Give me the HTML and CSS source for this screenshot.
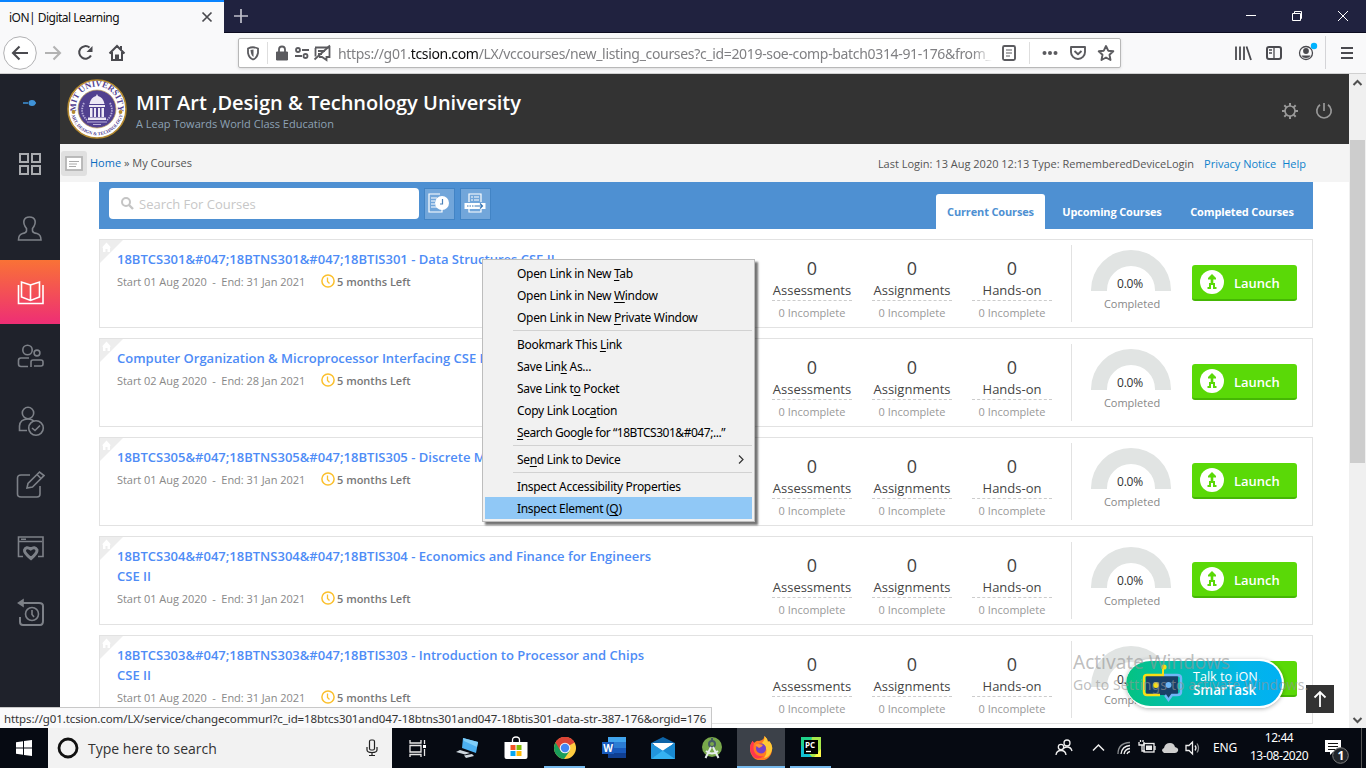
FILE: index.html
```html
<!DOCTYPE html>
<html lang="en">
<head>
<meta charset="utf-8">
<title>iON| Digital Learning</title>
<link rel="stylesheet" href="styles.css">
</head>
<body>
<svg class="defs" width="0" height="0">
  <symbol id="house" viewBox="0 0 24 24"><path d="M0 0H23L0 23Z" fill="#ededed"/><path d="M2 7.500L6.500 2.500L11 7.500H10V12H7.500V9H5.500V12H3V7.500Z" fill="#fff"/></symbol>
  <symbol id="clock" viewBox="0 0 14 14"><circle cx="7" cy="7" r="6.100" fill="none" stroke="#fbc02d" stroke-width="1.500"/><path d="M6.500 3.500V7.500L8.500 9.500" fill="none" stroke="#fbc02d" stroke-width="1.300"/></symbol>
  <symbol id="gauge" viewBox="0 0 80 41"><path d="M0 41V40A40 40 0 0 1 80 40V41H64V40A24 24 0 0 0 16 40V41Z" fill="#e1e4e3"/></symbol>
  <symbol id="launch" viewBox="0 0 24 24"><circle cx="12" cy="12" r="12" fill="#fff"/><path d="M12 4L16 8V9.500H13.300V13H15V17H16.500V19H13V15H11V19H7.500V17H9V13H10.700V9.500H8V8Z" fill="#5ad907"/></symbol>
</svg>

<div class="tabstrip">
  <div class="tab"><span class="tab-title">iON| Digital Learning</span>
    <svg width="12" height="12" viewBox="0 0 12 12"><path d="M1.500 1.500L10.500 10.500M10.500 1.500L1.500 10.500" stroke="#4a4a4f" stroke-width="1.700"/></svg></div>
  <svg class="plus" width="14" height="14"><path d="M7 0V14M0 7H14" stroke="#c0c0cc" stroke-width="1.700"/></svg>
  <div class="winbtns">
    <svg width="46" height="32"><path d="M18 15.500H28" stroke="#fff"/></svg>
    <svg width="46" height="32"><path d="M18.500 13.500H26.500V20.500H18.500ZM20.500 13V11.500H27.500V18.500H27" fill="none" stroke="#fff"/></svg>
    <svg width="46" height="32"><path d="M18 11L28 21M28 11L18 21" stroke="#fff"/></svg>
  </div>
</div>

<div class="toolbar">
  <svg class="nav" width="236" height="40" viewBox="0 0 236 40" fill="none" stroke="#4a4a4f" stroke-width="2">
    <circle cx="20" cy="20" r="16.300" fill="#fff" stroke="#b1b1b3" stroke-width="1"/>
    <path d="M13 20H28M19.500 13.500L13 20L19.500 26.500" stroke-width="2.100"/>
    <path d="M45 20H60M53.500 13.500L60 20L53.500 26.500" stroke="#b3b3b3" stroke-width="2.100"/>
    <path d="M89.500 14.500A6.300 6.300 0 1 0 91 22.500"/><path d="M92.500 13V19H86.500Z" fill="#4a4a4f" stroke="none"/>
    <path d="M109.500 20.500L117 13L124.500 20.500M112 19V27H122V19M116 27V22.500H118V27M121 13V17"/>
  </svg>
  <div class="urlbar">
    <svg width="92" height="28" viewBox="0 0 92 28" fill="none" stroke="#5b5b5f" stroke-width="1.800">
      <path d="M9 9.500Q14 7 19 9.500V14Q18 19 14 20.500Q10 19 9 14Z"/><path d="M14.500 10.500V18Q12 16.500 11.500 11Z" fill="#5b5b5f" stroke="none"/>
      <path d="M28.500 3V25" stroke="#dedede" stroke-width="1"/>
      <path d="M37.500 13H48.500V21H37.500Z" fill="#5b5b5f" stroke="#5b5b5f" stroke-width="1"/><path d="M40 13V10.500A3 3 0 0 1 46 10.500V13"/>
      <circle cx="59" cy="11" r="2"/><circle cx="66.500" cy="17" r="2"/><path d="M63 11H70M56 17H63"/>
      <path d="M76 8.500H90.500V18H87.500V21L83 18H80M76.500 9V17.500M79 12H86M79 15H83" /><path d="M75.500 20.500L91 6.500"/>
    </svg>
    <span class="url">https://g01.<b>tcsion.com</b>/LX/vccourses/new_listing_courses?c_id=2019-soe-comp-batch0314-91-176&amp;from_c</span>
    <svg width="121" height="28" viewBox="0 0 121 28" fill="none" stroke="#5b5b5f" stroke-width="1.900">
      <rect x="4" y="7" width="12" height="14" rx="1.500"/><path d="M7 11H13M7 14H13M7 17H11" stroke-width="1"/>
      <path d="M30.500 3V25" stroke="#dedede" stroke-width="1"/>
      <g fill="#5b5b5f" stroke="none"><circle cx="45.500" cy="14" r="2"/><circle cx="51" cy="14" r="2"/><circle cx="56.500" cy="14" r="2"/></g>
      <path d="M72 8H86V13A7 7 0 0 1 72 13ZM75.500 12L79 15.300L82.500 12" stroke-linejoin="round"/>
      <path d="M107 7L109.200 11.700L114.300 12.300L110.500 15.800L111.500 21L107 18.500L102.500 21L103.500 15.800L99.700 12.300L104.800 11.700Z" stroke-linejoin="round"/>
    </svg>
  </div>
  <svg class="tools" width="135" height="40" viewBox="0 0 135 40" fill="none" stroke="#4a4a4f" stroke-width="2">
    <path d="M5 13.500V27M9 13.500V27M13 13.500V27M15.500 13.500L20 27" stroke-width="1.800"/>
    <rect x="36" y="14" width="14" height="12" rx="2"/><path d="M43 14V26M38 17H41M38 20H41" stroke-width="1.300"/>
    <circle cx="75" cy="20" r="6.500" stroke-width="1.300"/><circle cx="75" cy="18" r="2.900" fill="#4a4a4f" stroke="none"/><path d="M70.500 22.500H79.500Q78.500 25 75 25T70.500 22.500" fill="#4a4a4f" stroke="none"/><circle cx="83" cy="13" r="3.200" fill="#00b3ff" stroke="none"/>
    <path d="M94.500 3V36" stroke="#d4d4d7" stroke-width="1"/>
    <path d="M110 15H122M110 20H122M110 25H122"/>
  </svg>
</div>

<div class="viewport">
  <nav class="side">
    <div class="pin"><svg width="14" height="8"><path d="M0 4H5M11 4H13" stroke="#3f93d8" stroke-width="1.500"/><ellipse cx="9" cy="4" rx="3.500" ry="3" fill="#3f93d8"/></svg></div>
    <a class="item"><svg width="30" height="32" viewBox="0 0 30 32"><path d="M5 6H13V14H5ZM17 6H25V14H17ZM5 18H13V26H5ZM17 18H25V26H17Z" stroke="#a9abaf" stroke-width="2"/></svg></a>
    <a class="item low"><svg width="30" height="32" viewBox="0 0 30 32"><path d="M11.500 15.500Q8 11 9 7.500Q10 4 14.500 4T20 7.500Q21 11 17.500 15.500V18Q18 20 22 20.500Q26 21.500 26 27H3.500Q3.500 21.500 7.500 20.500Q11 20 11.500 18Z"/></svg></a>
    <a class="item active"><svg width="30" height="32" viewBox="0 0 30 32"><path d="M3.500 9V27.500H28V9M15.500 9L6.500 6V21L15.500 24.500L24.500 21V6ZM15.500 9V24.500"/></svg></a>
    <a class="item low"><svg width="30" height="32" viewBox="0 0 30 32"><circle cx="12.500" cy="9" r="4.700"/><circle cx="22" cy="12" r="2.900"/><path d="M14 17H6Q3.500 17 3.500 19.500V23Q3.500 25.500 6 25.500H13M16 26V21Q16 19 18 19H26Q28 19 28 21V23Q28 25 26 25H19"/></svg></a>
    <a class="item low"><svg width="30" height="32" viewBox="0 0 30 32"><circle cx="13" cy="8" r="5.700"/><path d="M12 25.500H4.500V21Q5 14 13 14Q17 14 19 16.500"/><circle cx="21" cy="23" r="7.300"/><path d="M17 23L20 25.500L25 20.500"/></svg></a>
    <a class="item"><svg width="30" height="32" viewBox="0 0 30 32"><path d="M15 7H6Q2.500 7 2.500 10V26Q2.500 29 6 29H22Q25 29 25 26V18M12 20L13 15.500L24.500 4L29 7.500L17.500 19ZM22 6.500L26 10.500"/></svg></a>
    <a class="item"><svg width="30" height="32" viewBox="0 0 30 32"><path d="M8 24.500H3.500V5H28V24.500H23M4 9.500H27M6 7.300H11"/><path d="M16 26.500Q9 21 9.500 18Q11 14 15.700 17Q20 14 22 18Q22.500 21 16 26.500Z" stroke-width="3"/></svg></a>
    <a class="item low"><svg width="30" height="32" viewBox="0 0 30 32"><path d="M7 6H24Q28 6 28 9V24Q28 28 25 28H8Q5 28 5 25V20" stroke-width="2"/><path d="M8 3V9L3.500 6Z" fill="#7d8188"/><circle cx="17" cy="17" r="6.500"/><path d="M17 13V17.500L19 20"/></svg></a>
  </nav>

  <main class="page">
    <header class="head">
      <svg class="crest" width="60" height="60" viewBox="0 0 60 60">
        <defs><path id="arcTop" d="M9.500 33A21 21 0 1 1 50.500 33"/><path id="arcBot" d="M4.500 36A26.200 26.200 0 0 0 55.500 36"/></defs>
        <circle cx="30" cy="30" r="29" fill="#fff" stroke="#b4892f" stroke-width="1.600"/><circle cx="30" cy="30" r="19" fill="#51408f" stroke="#c6a75a" stroke-width=".7"/>
        <text class="seal-top"><textPath href="#arcTop" startOffset="50%">MIT UNIVERSITY</textPath></text>
        <text class="seal-bot"><textPath href="#arcBot" startOffset="50%">ART, DESIGN &amp; TECHNOLOGY</textPath></text>
        <circle cx="6.500" cy="33" r="1.900" fill="#b4892f"/><circle cx="53.500" cy="33" r="1.900" fill="#b4892f"/>
        <path d="M22.500 25Q24 18 29 17L30 15L31 17Q36 18 37.500 25ZM22 26H38V28H22ZM23 29H25.500V38H23ZM27 29H29V38H27ZM31 29H33V38H31ZM34.500 29H37V38H34.500ZM21 38.500H39V41H21Z" fill="#eee9f5"/>
        <path d="M17 24Q12 34 20 41M43 24Q48 34 40 41" fill="none" stroke="#b9afd9" stroke-width="1.800" stroke-dasharray="1.500 1"/><path d="M20 43H40M26 45.500H34" stroke="#b9afd9" stroke-width="1"/>
      </svg>
      <div class="brand"><h1>MIT Art ,Design &amp; Technology University</h1><p>A Leap Towards World Class Education</p></div>
      <svg class="headtools" width="54" height="18" viewBox="0 0 54 18" fill="none" stroke="#999" stroke-width="1.700">
        <circle cx="9" cy="9" r="5"/><path d="M9 1V4M9 14V17M1 9H4M14 9H17M3.300 3.300L5.400 5.400M12.600 12.600L14.700 14.700M3.300 14.700L5.400 12.600M12.600 5.400L14.700 3.300" stroke-width="2"/>
        <path d="M39 2.800A7.200 7.200 0 1 0 47 2.800M43 1V9" />
      </svg>
    </header>
    <div class="crumbs">
      <span class="note"><svg width="18" height="15"><rect x="1" y="1" width="16" height="13" fill="#fff" stroke="#b5b5b5" stroke-width="1.800"/><path d="M4 5.500H14M4 8H12M4 10.500H11" stroke="#aaa"/></svg></span>
      <p class="trail"><a>Home</a> » My Courses</p>
      <p class="login"><span>Last Login: 13 Aug 2020 12:13 Type: RememberedDeviceLogin</span><a>Privacy Notice</a><a>Help</a></p>
    </div>
    <section class="courses">
      <div class="filter">
        <div class="search"><svg width="13" height="13"><circle cx="5" cy="5" r="4" fill="none" stroke="#c4c4c4" stroke-width="2"/><path d="M8 8L12 12" stroke="#c4c4c4" stroke-width="2.400"/></svg><span>Search For Courses</span></div>
        <span class="sqbtn"><svg width="22" height="20" viewBox="0 0 22 20" fill="none" stroke="#fff" stroke-width="1.200"><path d="M12 1H1V19H14V16M3 5H9M3 8H7M3 11H7M3 14H9"/><circle cx="14" cy="10" r="7" fill="#fff" stroke="none"/><path d="M14.500 6V11H12" stroke="#4a80b8"/></svg></span>
        <span class="sqbtn"><svg width="22" height="20" viewBox="0 0 22 20" fill="none" stroke="#fff" stroke-width="1.200"><path d="M5 9V1H17V9M7 4H9M10 4H15M7 7H9M10 7H15M5 16V19H17V16"/><path d="M0.500 10H21.500V16H0.500Z" fill="#fff" stroke="none"/><path d="M3 13H12" stroke="#3977b5" stroke-dasharray="1.500 1"/><path d="M12 13H19M16 10.500L18.500 13L16 15.500" stroke="#3977b5"/></svg></span>
        <div class="tabs"><a class="on">Current Courses</a><a>Upcoming Courses</a><a>Completed Courses</a></div>
      </div>

      <article class="card">
        <svg class="corner"><use href="#house"/></svg>
        <div class="info"><h2>18BTCS301&amp;#047;18BTNS301&amp;#047;18BTIS301 - Data Structures CSE II</h2>
          <p><span class="dates">Start 01 Aug 2020 &nbsp;-&nbsp; End: 31 Jan 2021</span><svg class="clk"><use href="#clock"/></svg><b>5 months Left</b></p></div>
        <dl class="stat"><dt>0</dt><dd>Assessments</dd><dd class="inc">0 Incomplete</dd></dl>
        <dl class="stat"><dt>0</dt><dd>Assignments</dd><dd class="inc">0 Incomplete</dd></dl>
        <dl class="stat"><dt>0</dt><dd>Hands-on</dd><dd class="inc">0 Incomplete</dd></dl>
        <div class="progress"><div class="dial"><svg><use href="#gauge"/></svg><span>0.0%</span></div><em>Completed</em></div>
        <a class="launch"><svg><use href="#launch"/></svg><span>Launch</span></a>
      </article>
      <article class="card">
        <svg class="corner"><use href="#house"/></svg>
        <div class="info"><h2>Computer Organization &amp; Microprocessor Interfacing CSE II</h2>
          <p><span class="dates">Start 02 Aug 2020 &nbsp;-&nbsp; End: 28 Jan 2021</span><svg class="clk"><use href="#clock"/></svg><b>5 months Left</b></p></div>
        <dl class="stat"><dt>0</dt><dd>Assessments</dd><dd class="inc">0 Incomplete</dd></dl>
        <dl class="stat"><dt>0</dt><dd>Assignments</dd><dd class="inc">0 Incomplete</dd></dl>
        <dl class="stat"><dt>0</dt><dd>Hands-on</dd><dd class="inc">0 Incomplete</dd></dl>
        <div class="progress"><div class="dial"><svg><use href="#gauge"/></svg><span>0.0%</span></div><em>Completed</em></div>
        <a class="launch"><svg><use href="#launch"/></svg><span>Launch</span></a>
      </article>
      <article class="card">
        <svg class="corner"><use href="#house"/></svg>
        <div class="info"><h2>18BTCS305&amp;#047;18BTNS305&amp;#047;18BTIS305 - Discrete M</h2>
          <p><span class="dates">Start 01 Aug 2020 &nbsp;-&nbsp; End: 31 Jan 2021</span><svg class="clk"><use href="#clock"/></svg><b>5 months Left</b></p></div>
        <dl class="stat"><dt>0</dt><dd>Assessments</dd><dd class="inc">0 Incomplete</dd></dl>
        <dl class="stat"><dt>0</dt><dd>Assignments</dd><dd class="inc">0 Incomplete</dd></dl>
        <dl class="stat"><dt>0</dt><dd>Hands-on</dd><dd class="inc">0 Incomplete</dd></dl>
        <div class="progress"><div class="dial"><svg><use href="#gauge"/></svg><span>0.0%</span></div><em>Completed</em></div>
        <a class="launch"><svg><use href="#launch"/></svg><span>Launch</span></a>
      </article>
      <article class="card">
        <svg class="corner"><use href="#house"/></svg>
        <div class="info"><h2>18BTCS304&amp;#047;18BTNS304&amp;#047;18BTIS304 - Economics and Finance for Engineers<br>CSE II</h2>
          <p><span class="dates">Start 01 Aug 2020 &nbsp;-&nbsp; End: 31 Jan 2021</span><svg class="clk"><use href="#clock"/></svg><b>5 months Left</b></p></div>
        <dl class="stat"><dt>0</dt><dd>Assessments</dd><dd class="inc">0 Incomplete</dd></dl>
        <dl class="stat"><dt>0</dt><dd>Assignments</dd><dd class="inc">0 Incomplete</dd></dl>
        <dl class="stat"><dt>0</dt><dd>Hands-on</dd><dd class="inc">0 Incomplete</dd></dl>
        <div class="progress"><div class="dial"><svg><use href="#gauge"/></svg><span>0.0%</span></div><em>Completed</em></div>
        <a class="launch"><svg><use href="#launch"/></svg><span>Launch</span></a>
      </article>
      <article class="card">
        <svg class="corner"><use href="#house"/></svg>
        <div class="info"><h2>18BTCS303&amp;#047;18BTNS303&amp;#047;18BTIS303 - Introduction to Processor and Chips<br>CSE II</h2>
          <p><span class="dates">Start 01 Aug 2020 &nbsp;-&nbsp; End: 31 Jan 2021</span><svg class="clk"><use href="#clock"/></svg><b>5 months Left</b></p></div>
        <dl class="stat"><dt>0</dt><dd>Assessments</dd><dd class="inc">0 Incomplete</dd></dl>
        <dl class="stat"><dt>0</dt><dd>Assignments</dd><dd class="inc">0 Incomplete</dd></dl>
        <dl class="stat"><dt>0</dt><dd>Hands-on</dd><dd class="inc">0 Incomplete</dd></dl>
        <div class="progress"><div class="dial"><svg><use href="#gauge"/></svg><span>0.0%</span></div><em>Completed</em></div>
        <a class="launch"><svg><use href="#launch"/></svg><span>Launch</span></a>
      </article>
    </section>
  </main>

  <div class="scroll">
    <svg width="17" height="17"><path d="M4.500 11L8.500 7L12.500 11" fill="none" stroke="#505050" stroke-width="2"/></svg>
    <div class="thumb"></div>
    <svg class="down" width="17" height="17"><path d="M4.500 7L8.500 11L12.500 7" fill="none" stroke="#505050" stroke-width="2"/></svg>
  </div>
</div>

<footer class="taskbar">
  <div class="start"><svg width="16" height="16"><path d="M0 2.300L7 1.300V7.500H0ZM8 1.100L16 0V7.500H8ZM0 8.500H7V14.700L0 13.700ZM8 8.500H16V16L8 14.900Z" fill="#fff"/></svg></div>
  <div class="find"><svg width="22" height="22"><circle cx="11" cy="11" r="9" fill="none" stroke="#111" stroke-width="2.800"/></svg><span>Type here to search</span>
    <svg width="12" height="18" fill="none" stroke="#222" stroke-width="1.200"><rect x="3.500" y="1" width="5" height="10" rx="1.500"/><path d="M1 8V11Q1 13.500 6 13.500T11 11V8M6 13.500V16.500M3 16.500H9"/></svg></div>
  <div class="apps">
    <div class="app"><svg width="24" height="24" viewBox="0 0 24 24" fill="none" stroke="#e8e8e8" stroke-width="1.300"><path d="M4 4V7H15V4M4 9.500H15V16H4ZM4 21V18.500H15V21M18.500 4V8M18.500 13V20"/><path d="M17 9H20V12H17Z" fill="#fff" stroke="none"/></svg></div>
    <div class="app"><svg width="24" height="24" viewBox="0 0 24 24"><path d="M8 2L23 6L21 17L7 12Z" fill="#4cb0f1"/><path d="M8 2L23 6L22 11L9 5Z" fill="#80cef9"/><path d="M5 14L15 17L10 18.500L1 16ZM9 19.500L17 18L19 20L11 22Z" fill="#cfd8df"/></svg></div>
    <div class="app"><svg width="24" height="24" viewBox="0 0 24 24"><path d="M8.500 6V4Q8.500 1 12 1T15.500 4V6" fill="none" stroke="#fff" stroke-width="1.300"/><path d="M.5 6H23.500V21Q23.500 23 21.500 23H2.500Q.5 23 .5 21Z" fill="#fff"/><path d="M6.500 9H11.500V14H6.500Z" fill="#f35325"/><path d="M12.500 9H17.500V14H12.500Z" fill="#81bc06"/><path d="M6.500 15H11.500V20H6.500Z" fill="#05a6f0"/><path d="M12.500 15H17.500V20H12.500Z" fill="#ffba08"/></svg></div>
    <div class="app run"><svg width="24" height="24" viewBox="0 0 24 24"><circle cx="12" cy="12" r="11" fill="#ffcd40"/><path d="M12 12L2.500 6.500A11 11 0 0 1 21.500 6.500Z" fill="#db4437"/><path d="M2.500 6.500A11 11 0 0 0 11 23L16.800 14.700L12 12Z" fill="#1a9d5a"/><path d="M12 7H21.800A11 11 0 0 0 2.500 6.500L7.300 14.500Z" fill="#db4437"/><circle cx="12" cy="12" r="5.300" fill="#f1f1f1"/><circle cx="12" cy="12" r="4.200" fill="#4285f4"/></svg></div>
    <div class="app"><svg width="26" height="24" viewBox="0 0 26 24"><path d="M7 1H25V6H7Z" fill="#41a5ee"/><path d="M7 6H25V12H7Z" fill="#2b7cd3"/><path d="M7 12H25V17H7Z" fill="#185abd"/><path d="M7 17H25V22H7Z" fill="#103f91"/><path d="M1 6H13V18H1Z" fill="#185abd"/><text x="2.200" y="15.500" class="wletter">W</text></svg></div>
    <div class="app"><svg width="24" height="24" viewBox="0 0 24 24"><path d="M0 7L12 1L24 7V12H0Z" fill="#0d64a8"/><path d="M3 7H21V13L12 17L3 13Z" fill="#fff"/><path d="M0 7L14 16L0 23Z" fill="#2295dc"/><path d="M24 7V23H0L12 14.500Z" fill="#35b2f1"/><path d="M24 7V23L11 14Z" fill="#1989d0"/><path d="M1 7H23L12 14.500Z" fill="#fff"/></svg></div>
    <div class="app"><svg width="24" height="24" viewBox="0 0 24 24"><circle cx="12" cy="11" r="10" fill="#78a84b"/><circle cx="12" cy="8" r="3" fill="none" stroke="#455a64" stroke-width="2"/><path d="M12 2V5" stroke="#455a64" stroke-width="2"/><path d="M11 11L5.500 22M13 11L18.500 22M6 15Q12 20 18 15" fill="none" stroke="#e7eeee" stroke-width="2"/></svg></div>
    <div class="app run focus"><svg width="24" height="24" viewBox="0 0 24 24"><path d="M3.500 5L5 7Q8 4 10 5L13 4Q15 3 15.500 0Q18 2 19 6L20 5Q24 9 23 14A11 11 0 0 1 1 13Q1 8 3.500 5Z" fill="#ff7a22"/><path d="M15.500 0Q18 2 19 6L20 5Q24 9 23 14Q21 21 15 22Q21 14 13 7Q16 4 15.500 0Z" fill="#ffca35"/><path d="M3.500 5L5 7Q3 15 8 19Q11 21 15 20Q7 26 2.500 18Q-1 11 3.500 5Z" fill="#ff3750"/><circle cx="12" cy="12.500" r="5" fill="#7541c9"/><path d="M6 9Q9 7 14 9Q13 11 10 12Z" fill="#ff9635"/></svg></div>
    <div class="app run"><svg width="22" height="22" viewBox="0 0 22 22"><path d="M1 1H21V21H1Z" fill="#20d28b"/><path d="M12 1H21V21H8Z" fill="#a6e84a"/><path d="M1 9L12 21H1Z" fill="#12bfd2"/><path d="M14 21L21 13V21Z" fill="#fcf84a"/><path d="M4 4H18V18H4Z" fill="#000"/><text x="5" y="11.500" class="pc">PC</text><path d="M6 15.500H11" stroke="#fff" stroke-width="1.300"/></svg></div>
  </div>
  <div class="tray">
    <svg width="150" height="40" viewBox="0 0 150 40" fill="none" stroke="#eee" stroke-width="1.300">
      <circle cx="15" cy="15" r="3"/><path d="M11 21Q12 19 15 19Q19 19 20 23"/><circle cx="9" cy="19" r="2.700"/><path d="M4 27Q4.500 22.500 9 22.500T14 27"/>
      <path d="M41 22.500L46.500 17L52 22.500" stroke-width="1.500"/>
      <g stroke="#8a8d90"><path d="M66 26Q66 15 78 14.500"/></g><path d="M69 26Q70 18 78 17.500M72 26Q73 21 78 20.500M75 26Q75.500 24 78 23.500"/>
      <rect x="92" y="15.500" width="10" height="8.500"/><path d="M94 17.500H100V22H94Z" fill="#eee" stroke="none"/><path d="M103 18V22M87 14V17H92V14M88.500 12V14M91 12V14M90 17V23H93" />
      <path d="M112 25Q108 22 112 20Q113 15 118 15Q122 15 123 19Q127 20 126 23Q125 25 123 25Z" fill="#cfcfcf" stroke="none"/>
      <path d="M134 17.500H137L140.500 14V26L137 22.500H134ZM143 17.500Q145 20 143 22.500"/><path d="M145 15.500Q148 20 145 24.500" stroke="#8a8d90"/>
    </svg>
    <span class="lang">ENG</span>
    <div class="time"><span>12:44</span><span>13-08-2020</span></div>
    <svg class="notif" width="26" height="26"><path d="M1 1H17V13H9L6 16V13H1Z" fill="#fff"/><path d="M4 4.500H14M4 7.500H14M4 10.500H12" stroke="#111"/><circle cx="16.500" cy="16.500" r="7.800" fill="#22262b" stroke="#7c7c7c"/><text x="13.500" y="21" class="one">1</text></svg>
    <i class="peek"></i>
  </div>
</footer>

<div class="smart">
  <svg width="42" height="42" viewBox="0 0 42 42"><path d="M21 5V11" stroke="#f9dd16" stroke-width="2"/><circle cx="22" cy="4" r="2.600" fill="#f9dd16"/><path d="M4 13H36V32H29L26 36L22 32H4Z" fill="#193f67"/><path d="M22 12H5Q2 12 2 15V29Q2 32 5 32H18" fill="none" stroke="#f9dd16" stroke-width="2.400"/><path d="M22 12H35Q39 12 39 15V29Q39 32 35 32H30L26.500 37L23 32" fill="none" stroke="#70b6f7" stroke-width="2.400"/><circle cx="14" cy="22" r="3" fill="#f9dd16"/><circle cx="26.500" cy="22" r="3" fill="#6cb5f6"/></svg>
  <span>Talk to iON<b>SmarTask</b></span>
</div>
<div class="totop"><svg width="14" height="18"><path d="M7 17V2M1.500 7.500L7 2L12.500 7.500" fill="none" stroke="#fff" stroke-width="1.800"/></svg></div>
<div class="watermark"><span>Activate Windows</span><small>Go to Settings to activate Windows.</small></div>
<div class="status"><span>https://g01.tcsion.com/LX/service/changecommurl?c_id=18btcs301and047-18btns301and047-18btis301-data-str-387-176&amp;orgid=176</span></div>

<div class="menu">
  <div>Open Link in New <u>T</u>ab</div><div>Open Link in New <u>W</u>indow</div><div>Open Link in New <u>P</u>rivate Window</div>
  <hr>
  <div>Bookmark This <u>L</u>ink</div><div>Save Lin<u>k</u> As...</div><div>Save Link t<u>o</u> Pocket</div><div>Copy Link Loc<u>a</u>tion</div><div class="tight"><u>S</u>earch Google for “18BTCS301&amp;#047;...”</div>
  <hr>
  <div class="sub">Se<u>n</u>d Link to Device<svg width="6" height="9"><path d="M1 .5L5 4.500L1 8.500" fill="none" stroke="#333" stroke-width="1.200"/></svg></div>
  <hr>
  <div>Inspect Accessibility Properties</div><div class="hot">Inspect Element (<u>Q</u>)</div>
</div>
</body>
</html>
```
FILE: styles.css
```css
* { box-sizing: border-box; }
body { margin: 0; width: 1366px; height: 768px; overflow: hidden; position: relative; display: flex; flex-direction: column; background: #fff; font-family: "Open Sans", "Noto Sans", sans-serif; }
h1, h2, p, dl, dd { margin: 0; }
svg { display: block; flex: none; }
.defs { position: absolute; }

.tabstrip { height: 33px; flex: none; display: flex; background: #20223f; border-bottom: 1px solid #0c0c20; }
.tab { width: 224px; height: 33px; padding: 0 11px 0 9px; display: flex; align-items: center; justify-content: space-between; background: #f9f9fa; border-top: 2px solid #0a84ff; }
.tab svg { margin-top: -1px; }
.tab-title { font: 12px "Noto Sans", sans-serif; letter-spacing: -.52px; color: #111; }
.plus { margin: 9px 0 0 10px; }
.winbtns { display: flex; margin-left: auto; }

.toolbar { height: 41px; flex: none; display: flex; background: #f9f9fa; border-bottom: 1px solid #d0d0d0; }
.urlbar { width: 883px; height: 30px; margin: 5px 0 0 2px; display: flex; background: #fff; border: 1px solid #b8b8b8; border-radius: 2px; box-shadow: 0 1px 3px rgba(0,0,0,.12); }
.url { width: 668px; padding-left: 7px; overflow: hidden; white-space: nowrap; font: 14px/30px "Noto Sans", sans-serif; letter-spacing: -.33px; color: #808083; -webkit-mask-image: linear-gradient(90deg, #000 96%, transparent 99%); }
.url b { font-weight: 400; color: #0c0c0d; }
.tools { margin-left: 110px; }

.viewport { height: 654px; flex: none; display: flex; overflow: hidden; }
.side { width: 60px; flex: none; background: #1f222b; }
.pin { height: 58px; display: flex; align-items: center; justify-content: center; }
.item { height: 64px; display: flex; align-items: center; justify-content: center; }
.item svg { fill: none; stroke: #7d8188; stroke-width: 1.6; }
.item.low { padding-top: 2px; }
.item.active { background: linear-gradient(#f97236, #ee2e75); }
.item.active svg { stroke: #fff; }
.page { width: 1289px; flex: none; }
.head { height: 70px; display: flex; background: #333; }
.crest { margin: 5px 0 0 7px; }
.seal-top { font: 700 8.600px "Liberation Serif", serif; fill: #51408f; text-anchor: middle; }
.seal-bot { font: 700 4.700px "Liberation Serif", serif; fill: #51408f; text-anchor: middle; }
.brand { margin: 16px 0 0 9px; }
.brand h1 { font-size: 20px; line-height: 26px; font-weight: 600; color: #fff; }
.brand p { font-size: 11px; line-height: 16px; color: #8da2b5; }
.headtools { margin: 28px 14px 0 auto; }
.crumbs { height: 38px; display: flex; align-items: center; background: #f4f4f4; font-size: 11px; color: #555; }
.note { width: 26px; height: 25px; margin-left: 1px; display: flex; align-items: center; justify-content: center; background: #e0e0e0; border-radius: 3px; }
.crumbs a { color: #0a6cc0; }
.trail { margin: -2px 0 0 3px; }
.login { display: flex; margin: 0 43px 0 auto; gap: 6px; }
.login span { margin-right: 4px; }
.login a { color: #0d82cc; }

.courses { width: 1214px; margin-left: 39px; }
.filter { height: 47px; display: flex; padding-left: 10px; background: #4e90d2; }
.search { width: 310px; height: 31px; margin: 6px 5px 0 0; padding-left: 12px; display: flex; align-items: center; gap: 5px; background: #fff; border-radius: 4px; font-size: 13px; color: #c7c7c7; }
.sqbtn { width: 31px; height: 32px; margin: 6px 5px 0 0; padding: 0 1px 3px 0; display: flex; align-items: center; justify-content: center; background: #72a6da; border: 1px solid #4284c5; }
.tabs { display: flex; margin: 12px 0 0 auto; }
.tabs a { padding: 9px 0 0; font-size: 11px; line-height: 18px; font-weight: 700; letter-spacing: -.15px; color: #fff; text-align: center; white-space: nowrap; }
.tabs a:nth-child(1) { width: 109px; background: #fff; color: #4e90d2; border-radius: 3px 3px 0 0; }
.tabs a:nth-child(2) { width: 134px; }
.tabs a:nth-child(3) { width: 134px; padding-right: 8px; }

.card { position: relative; height: 89px; margin-top: 10px; display: flex; border: 1px solid #e2e2e2; }
.corner { position: absolute; left: 0; top: 0; width: 24px; height: 24px; }
.info { width: 662px; padding: 9px 0 0 17px; }
.info h2 { font-size: 13px; line-height: 20px; font-weight: 600; color: #4e8cf6; white-space: nowrap; }
.info p { display: flex; align-items: center; height: 16px; margin-top: 4px; font-size: 11px; color: #888; white-space: nowrap; }
.dates { width: 204px; letter-spacing: -.05px; }
.clk { width: 14px; height: 14px; margin-right: 2px; }
.info b { font-weight: 600; color: #777; }
.stat { width: 80px; margin: 16px 10px 0; text-align: center; flex: none; }
.stat dt { font-size: 18px; line-height: 24px; height: 25px; color: #444; }
.stat dd { height: 20px; font-size: 13px; line-height: 19px; color: #444; border-bottom: 1px dashed #ccc; white-space: nowrap; }
.stat dd.inc { padding-top: 2px; font-size: 11px; color: #999; border: 0; }
.progress { width: 100px; height: 77px; margin: 5px 0 0 9px; padding: 5px 0 0 19px; border-left: 1px solid #e2e2e2; text-align: center; flex: none; }
.dial { position: relative; width: 80px; height: 41px; }
.dial svg { width: 80px; height: 41px; }
.dial span { position: absolute; left: 0; right: 2px; bottom: -2px; font-size: 12px; line-height: 18px; letter-spacing: -.2px; color: #333; }
.progress em { display: block; width: 82px; margin-top: 5px; font-size: 11px; line-height: 16px; font-style: normal; color: #888; }
.launch { width: 105px; height: 36px; margin: 25px 0 0 21px; padding: 0 0 0 8px; display: flex; align-items: center; gap: 10px; background: #5ad907; border-bottom: 2px solid #45b704; border-radius: 3px; color: #fff; font-size: 13px; font-weight: 600; }
.launch svg { width: 24px; height: 24px; }
.launch span { padding-top: 1px; }

.scroll { width: 17px; background: #f0f0f0; display: flex; flex-direction: column; }
.thumb { height: 323px; margin: 49px 1px 0; background: #cdcdcd; }
.down { margin-top: auto; }

.taskbar { height: 40px; flex: none; display: flex; background: #060a12; }
.start { width: 48px; padding: 12px 0 0 16px; }
.find { width: 344px; height: 40px; padding: 0 14px 0 9px; display: flex; align-items: center; background: #f2f2f2; font-size: 14px; color: #333; }
.find span { margin: 0 auto 0 9px; }
.apps { display: flex; padding-left: 1px; }
.app { width: 49px; height: 40px; padding-top: 8px; display: flex; justify-content: center; }
.app.run { border-bottom: 2px solid #76b9ed; margin: 0 4px; width: 41px; }
.app.focus { width: 48px; margin: 0 1px; background: #3c4149; }
.wletter { font: 700 10px "Open Sans", sans-serif; fill: #fff; }
.pc { font: 700 8px "Open Sans", sans-serif; fill: #fff; }
.tray { margin-left: auto; width: 314px; display: flex; color: #fff; font: 12px "Noto Sans", sans-serif; }
.lang { margin: 11px 0 0 11px; width: 27px; letter-spacing: -.2px; }
.time { width: 76px; margin-left: 1px; padding-top: 2px; display: flex; flex-direction: column; align-items: center; gap: 2px; letter-spacing: -.45px; line-height: 16px; }
.notif { margin: 11px 0 0 7px; }
.one { font: 700 12px "Open Sans", sans-serif; fill: #fff; }
.peek { width: 1px; margin-left: auto; margin-right: 4px; background: #555; }

.smart { position: absolute; left: 1126px; top: 659px; width: 158px; height: 49px; padding-left: 16px; display: flex; align-items: center; gap: 9px; border: 2px solid #fff; border-left: 0; border-radius: 25px; background: linear-gradient(90deg, #04c380, #02b5e8 75%, #01b0f3); box-shadow: 0 1px 4px rgba(0,0,0,.3); color: #fff; font-size: 12.600px; line-height: 14px; }
.smart b { display: block; font-weight: 600; font-size: 13.400px; line-height: 13px; }
.totop { position: absolute; left: 1306px; top: 685px; width: 28px; height: 28px; padding: 5px 7px; background: #333; }
.watermark { position: absolute; left: 1073px; top: 649px; display: flex; flex-direction: column; color: rgba(150,150,150,.62); white-space: nowrap; font-family: "Noto Sans", sans-serif; font-size: 19px; line-height: 26px; }
.watermark small { font-size: 14px; line-height: 20px; letter-spacing: .1px; }
.status { position: absolute; left: 0; top: 707px; width: 712px; height: 21px; padding-left: 4px; overflow: hidden; background: #f9f9fa; border: solid #c8c8c8; border-width: 1px 1px 0 0; white-space: nowrap; font: 11.500px/21px "Noto Sans", sans-serif; letter-spacing: -.1px; color: #333; }

.menu { position: absolute; left: 482px; top: 259px; width: 273px; height: 263px; padding: 2px 2px 3px; background: #f1f1f1; border: 1px solid #bdbdbd; box-shadow: 3px 3px 2px rgba(0,0,0,.55); font: 12px/24px "Noto Sans", sans-serif; letter-spacing: -.31px; color: #000; }
.menu div { height: 22px; padding-left: 32px; white-space: nowrap; }
.menu hr { height: 1px; margin: 2px 0 2px 28px; border: 0; background: #d2d2d2; }
.menu u { text-underline-offset: 2px; }
.menu .tight { letter-spacing: -.46px; }
.sub { display: flex; white-space: pre !important; }
.sub svg { margin: 7px 8px 0 auto; }
.menu .hot { background: #90c8f6; }
```
